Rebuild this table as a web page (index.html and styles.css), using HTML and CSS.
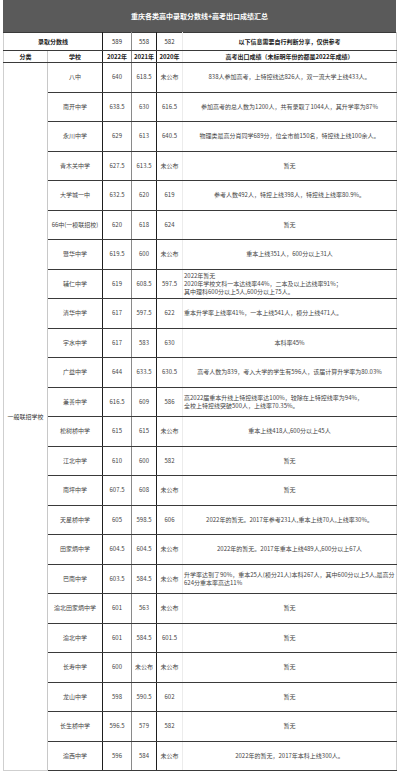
FILE: index.html
```html
<!DOCTYPE html>
<html lang="zh-CN">
<head>
<meta charset="utf-8">
<link rel="stylesheet" href="styles.css">
</head>
<body>
<div class="sheet">
  <div class="title">重庆各类高中录取分数线+高考出口成绩汇总</div>
  <table class="grid">
    <colgroup>
      <col class="w-a"><col class="w-b"><col class="w-c"><col class="w-d"><col class="w-e"><col class="w-f">
    </colgroup>
    <tr class="h1">
      <td colspan="2" class="cb">录取分数线</td>
      <td class="cc num">589</td>
      <td class="cd num">558</td>
      <td class="ce num">582</td>
      <td class="cf">以下信息需要自行判断分享，仅供参考</td>
    </tr>
    <tr class="h2">
      <td class="ca">分类</td>
      <td class="cb">学校</td>
      <td class="cc">2022年</td>
      <td class="cd">2021年</td>
      <td class="ce">2020年</td>
      <td class="cf">高考出口成绩（未标明年份的都是2022年成绩）</td>
    </tr>
    <tr class="d">
      <td class="ca cat" rowspan="24">一般联招学校</td>
      <td class="cb">八中</td><td class="cc">640</td><td class="cd">618.5</td><td class="ce">未公布</td>
      <td class="cf">838人参加高考，上特控线达826人，双一流大学上线433人。</td>
    </tr>
    <tr class="d"><td class="cb">南开中学</td><td class="cc">638.5</td><td class="cd">630</td><td class="ce">616.5</td>
      <td class="cf">参加高考的总人数为1200人，共有录取了1044人，其升学率为87%</td></tr>
    <tr class="d"><td class="cb">永川中学</td><td class="cc">629</td><td class="cd">613</td><td class="ce">640.5</td>
      <td class="cf">物理类最高分肖同学689分，位全市前150名，特控线上线100余人。</td></tr>
    <tr class="d"><td class="cb">青木关中学</td><td class="cc">627.5</td><td class="cd">613.5</td><td class="ce">未公布</td>
      <td class="cf">暂无</td></tr>
    <tr class="d"><td class="cb">大学城一中</td><td class="cc">632.5</td><td class="cd">620</td><td class="ce">619</td>
      <td class="cf">参考人数492人，特控上线398人，特控线上线率80.9%。</td></tr>
    <tr class="d"><td class="cb">66中(一模联招校)</td><td class="cc">620</td><td class="cd">618</td><td class="ce">624</td>
      <td class="cf">暂无</td></tr>
    <tr class="d"><td class="cb">暨华中学</td><td class="cc">619.5</td><td class="cd">600</td><td class="ce">未公布</td>
      <td class="cf">重本上线351人，600分以上31人</td></tr>
    <tr class="d"><td class="cb">辅仁中学</td><td class="cc">619</td><td class="cd">608.5</td><td class="ce">597.5</td>
      <td class="cf left">2022年暂无<br>2020年学校文科一本达线率44%，二本及以上达线率91%；<br>其中理科600分以上5人,600分以上75人。</td></tr>
    <tr class="d"><td class="cb">清华中学</td><td class="cc">617</td><td class="cd">597.5</td><td class="ce">622</td>
      <td class="cf left">重本升学率上线率41%，一本上线541人，模分上线471人。</td></tr>
    <tr class="d"><td class="cb">字水中学</td><td class="cc">617</td><td class="cd">583</td><td class="ce">630</td>
      <td class="cf">本科率45%</td></tr>
    <tr class="d"><td class="cb">广益中学</td><td class="cc">644</td><td class="cd">633.5</td><td class="ce">630.5</td>
      <td class="cf">高考人数为839，考入大学的学生有596人，该届计算升学率为80.03%</td></tr>
    <tr class="d"><td class="cb">兼善中学</td><td class="cc">616.5</td><td class="cd">609</td><td class="ce">586</td>
      <td class="cf left">高2022届重本升线上特控线率达100%，较除在上特控线率为94%，<br>全校上特控线突破500人，上线率70.35%。</td></tr>
    <tr class="d"><td class="cb">松树桥中学</td><td class="cc">615</td><td class="cd">615</td><td class="ce">未公布</td>
      <td class="cf">重本上线418人,600分以上45人</td></tr>
    <tr class="d"><td class="cb">江北中学</td><td class="cc">610</td><td class="cd">600</td><td class="ce">582</td>
      <td class="cf">暂无</td></tr>
    <tr class="d"><td class="cb">南坪中学</td><td class="cc">607.5</td><td class="cd">608</td><td class="ce">未公布</td>
      <td class="cf">暂无</td></tr>
    <tr class="d"><td class="cb">天星桥中学</td><td class="cc">605</td><td class="cd">598.5</td><td class="ce">606</td>
      <td class="cf">2022年的暂无。2017年参考231人,重本上线70人,上线率30%。</td></tr>
    <tr class="d"><td class="cb">田家炳中学</td><td class="cc">604.5</td><td class="cd">604.5</td><td class="ce">未公布</td>
      <td class="cf">2022年的暂无。2017年重本上线489人,600分以上67人</td></tr>
    <tr class="d"><td class="cb">巴南中学</td><td class="cc">603.5</td><td class="cd">584.5</td><td class="ce">未公布</td>
      <td class="cf left">升学率达到了90%，重本25人(模分21人)本科267人，其中600分以上5人,最高分<br>624分重本率高达11%</td></tr>
    <tr class="d"><td class="cb">渝北田家炳中学</td><td class="cc">601</td><td class="cd">563</td><td class="ce">未公布</td>
      <td class="cf">暂无</td></tr>
    <tr class="d"><td class="cb">渝北中学</td><td class="cc">601</td><td class="cd">584.5</td><td class="ce">601.5</td>
      <td class="cf">暂无</td></tr>
    <tr class="d"><td class="cb">长寿中学</td><td class="cc">600</td><td class="cd">未公布</td><td class="ce">未公布</td>
      <td class="cf">暂无</td></tr>
    <tr class="d"><td class="cb">龙山中学</td><td class="cc">598</td><td class="cd">590.5</td><td class="ce">602</td>
      <td class="cf">暂无</td></tr>
    <tr class="d"><td class="cb">长生桥中学</td><td class="cc">596.5</td><td class="cd">579</td><td class="ce">582</td>
      <td class="cf">暂无</td></tr>
    <tr class="d"><td class="cb">渝西中学</td><td class="cc">596</td><td class="cd">584</td><td class="ce">未公布</td>
      <td class="cf">2022年的暂无，2017年本科上线300人。</td></tr>
  </table>
</div>
</body>
</html>
```

FILE: styles.css
```css
html, body {
  margin: 0;
  padding: 0;
  background: #ffffff;
}

.sheet {
  width: 393px;
  margin: 0 0 0 3px;
  font-family: "Noto Sans CJK SC", "Noto Sans", sans-serif;
  color: #444;
}

.title {
  height: 32px;
  background: #5a5a5a;
  color: #ffffff;
  font-size: 7px;
  font-weight: bold;
  display: flex;
  align-items: center;
  justify-content: center;
}

.grid {
  width: 393px;
  border-collapse: collapse;
  table-layout: fixed;
  font-size: 6px;
  line-height: 8px;
}

.w-a { width: 44px; }
.w-b { width: 55px; }
.w-c { width: 29px; }
.w-d { width: 25px; }
.w-e { width: 26px; }
.w-f { width: 214px; }

.grid td {
  padding: 0;
  text-align: center;
  vertical-align: middle;
  border-top: 1px solid #3a3a3a;
  border-bottom: 1px solid #3a3a3a;
  white-space: nowrap;
  overflow: hidden;
}

.grid td.ca { border-left: 1px solid #cfcfcf; border-right: 1px solid #c8c8c8; }
.grid td.cb { border-right: 1px solid #1e1e1e; }
.grid td.cc { border-right: 1px solid #8a8a8a; }
.grid td.cd { border-right: 1px solid #1e1e1e; }
.grid td.ce { border-right: 1px solid #ececec; }
.grid td.cf { border-right: 1px solid #cfcfcf; }

.grid td.cat {
  border-top: 1px solid #3a3a3a;
  border-bottom: 1px solid #cfcfcf;
  color: #333;
}

.h1 td {
  height: 17px;
  font-weight: bold;
  color: #222;
}
.h1 td.num { font-weight: normal; color: #333; }
.h1 td.cb { border-left: 1px solid #cfcfcf; }

.h2 td {
  height: 11px;
  font-weight: bold;
  color: #222;
}

.d td {
  height: 28.5px;
}

.grid td.left {
  text-align: left;
  padding-left: 1px;
}
```
